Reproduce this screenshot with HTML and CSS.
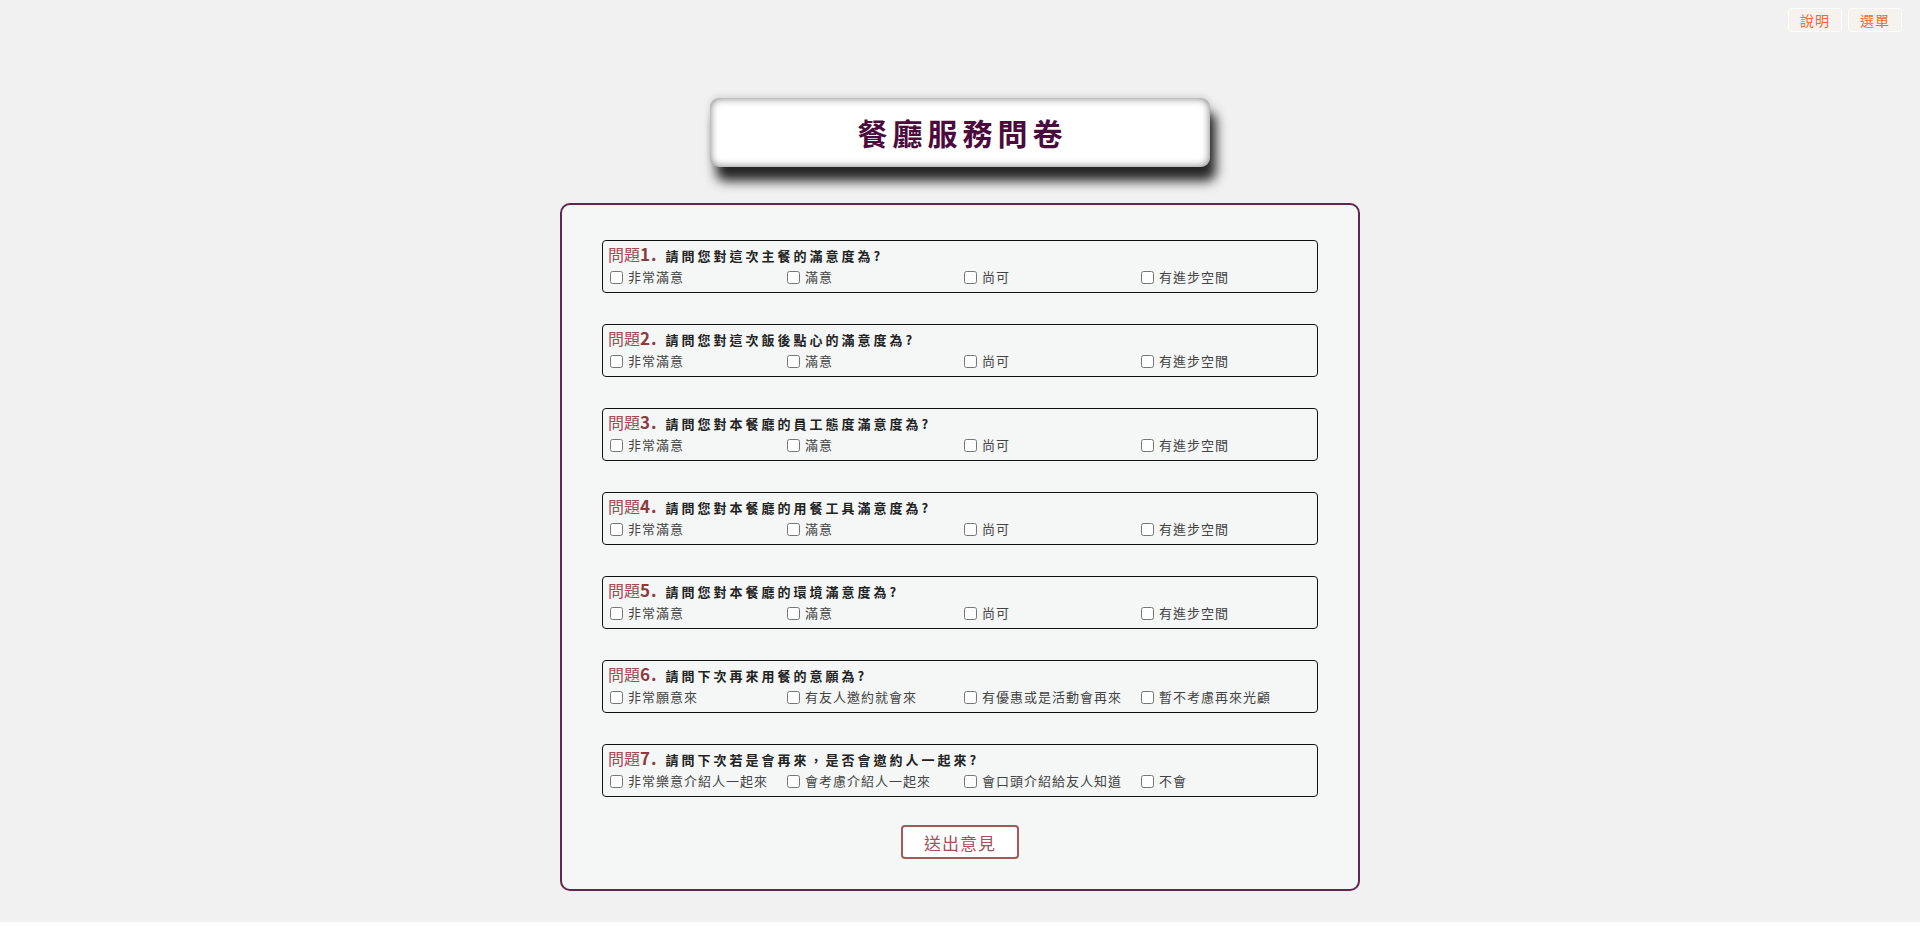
FILE: index.html
```html
<!DOCTYPE html>
<html lang="zh-Hant">
<head>
<meta charset="utf-8">
<title>餐廳服務問卷</title>
<link rel="stylesheet" href="styles.css">
</head>
<body>
<div class="page">
  <nav class="topbar">
    <button class="top-btn" type="button">說明</button>
    <button class="top-btn" type="button">選單</button>
  </nav>
  <h1 class="title">餐廳服務問卷</h1>
  <form class="survey">
    <div class="question">
      <div class="q-title"><span class="q-label">問題</span><span class="q-num">1.</span><span class="q-text">請問您對這次主餐的滿意度為?</span></div>
      <div class="options">
        <label class="opt"><input type="checkbox"> 非常滿意</label>
        <label class="opt"><input type="checkbox"> 滿意</label>
        <label class="opt"><input type="checkbox"> 尚可</label>
        <label class="opt"><input type="checkbox"> 有進步空間</label>
      </div>
    </div>
    <div class="question">
      <div class="q-title"><span class="q-label">問題</span><span class="q-num">2.</span><span class="q-text">請問您對這次飯後點心的滿意度為?</span></div>
      <div class="options">
        <label class="opt"><input type="checkbox"> 非常滿意</label>
        <label class="opt"><input type="checkbox"> 滿意</label>
        <label class="opt"><input type="checkbox"> 尚可</label>
        <label class="opt"><input type="checkbox"> 有進步空間</label>
      </div>
    </div>
    <div class="question">
      <div class="q-title"><span class="q-label">問題</span><span class="q-num">3.</span><span class="q-text">請問您對本餐廳的員工態度滿意度為?</span></div>
      <div class="options">
        <label class="opt"><input type="checkbox"> 非常滿意</label>
        <label class="opt"><input type="checkbox"> 滿意</label>
        <label class="opt"><input type="checkbox"> 尚可</label>
        <label class="opt"><input type="checkbox"> 有進步空間</label>
      </div>
    </div>
    <div class="question">
      <div class="q-title"><span class="q-label">問題</span><span class="q-num">4.</span><span class="q-text">請問您對本餐廳的用餐工具滿意度為?</span></div>
      <div class="options">
        <label class="opt"><input type="checkbox"> 非常滿意</label>
        <label class="opt"><input type="checkbox"> 滿意</label>
        <label class="opt"><input type="checkbox"> 尚可</label>
        <label class="opt"><input type="checkbox"> 有進步空間</label>
      </div>
    </div>
    <div class="question">
      <div class="q-title"><span class="q-label">問題</span><span class="q-num">5.</span><span class="q-text">請問您對本餐廳的環境滿意度為?</span></div>
      <div class="options">
        <label class="opt"><input type="checkbox"> 非常滿意</label>
        <label class="opt"><input type="checkbox"> 滿意</label>
        <label class="opt"><input type="checkbox"> 尚可</label>
        <label class="opt"><input type="checkbox"> 有進步空間</label>
      </div>
    </div>
    <div class="question">
      <div class="q-title"><span class="q-label">問題</span><span class="q-num">6.</span><span class="q-text">請問下次再來用餐的意願為?</span></div>
      <div class="options">
        <label class="opt"><input type="checkbox"> 非常願意來</label>
        <label class="opt"><input type="checkbox"> 有友人邀約就會來</label>
        <label class="opt"><input type="checkbox"> 有優惠或是活動會再來</label>
        <label class="opt"><input type="checkbox"> 暫不考慮再來光顧</label>
      </div>
    </div>
    <div class="question">
      <div class="q-title"><span class="q-label">問題</span><span class="q-num">7.</span><span class="q-text">請問下次若是會再來，是否會邀約人一起來?</span></div>
      <div class="options">
        <label class="opt"><input type="checkbox"> 非常樂意介紹人一起來</label>
        <label class="opt"><input type="checkbox"> 會考慮介紹人一起來</label>
        <label class="opt"><input type="checkbox"> 會口頭介紹給友人知道</label>
        <label class="opt"><input type="checkbox"> 不會</label>
      </div>
    </div>
    <div class="actions">
      <button class="submit" type="button">送出意見</button>
    </div>
  </form>
</div>
</body>
</html>
```

FILE: styles.css
```css
html {
  background: #ffffff;
}

body {
  margin: 0;
  font-family: "Noto Sans CJK TC", "Noto Sans", sans-serif;
}

.page {
  background: #f0f1f0;
  padding: 8px 0 31px;
}

.topbar {
  display: flex;
  justify-content: flex-end;
  gap: 6px;
  padding-right: 18px;
  height: 24px;
}

.top-btn {
  width: 54px;
  height: 24px;
  padding: 0;
  background: #f6f2ee;
  border: 1px solid #ffffff;
  border-radius: 4px;
  color: #f0682e;
  font-family: "Noto Sans CJK TC", sans-serif;
  font-size: 14px;
  letter-spacing: 1px;
  line-height: 22px;
}

.title {
  box-sizing: border-box;
  width: 500px;
  height: 69px;
  margin: 66px auto 0;
  background: #ffffff;
  border-radius: 9px;
  box-shadow: inset 0 0 9px rgba(0, 0, 0, 0.55), 6px 14px 12px rgba(0, 0, 0, 0.85), 0 -2px 6px rgba(0, 0, 0, 0.12);
  color: #4b0b3d;
  font-size: 30px;
  font-weight: 700;
  letter-spacing: 5px;
  line-height: 69px;
  text-align: center;
  padding-left: 5px;
}

.survey {
  box-sizing: border-box;
  width: 800px;
  margin: 36px auto 0;
  padding: 35px 40px 30px;
  background: #f4f7f6;
  border: 2px solid #5e2750;
  border-radius: 10px;
  display: flex;
  flex-direction: column;
  gap: 31px;
}

.question {
  border: 1px solid #111;
  border-radius: 4px;
  padding: 2px 3px 4px;
  height: 53px;
  box-sizing: border-box;
}

.q-title {
  height: 22px;
  line-height: 22px;
  white-space: nowrap;
  padding-left: 2px;
}

.q-label {
  color: #a34a52;
  font-size: 16px;
}

.q-num {
  color: #8e3a3c;
  font-size: 17px;
  font-weight: 700;
  letter-spacing: 1px;
  margin-right: 8px;
}

.q-text {
  color: #222;
  font-size: 13px;
  font-weight: 700;
  letter-spacing: 3px;
}

.options {
  display: grid;
  grid-template-columns: repeat(4, 1fr);
  margin-top: 2px;
}

.opt {
  display: flex;
  align-items: center;
  gap: 2px;
  color: #444;
  font-size: 13px;
  letter-spacing: 1px;
  line-height: 20px;
  white-space: nowrap;
}

.opt input {
  margin: 3px 3px 3px 4px;
}

.actions {
  display: flex;
  justify-content: center;
  margin-top: -3px;
}

.submit {
  width: 118px;
  height: 34px;
  padding: 0;
  background: #ffffff;
  border: 2px solid #a4585a;
  border-radius: 4px;
  color: #a4505a;
  font-family: "Noto Sans CJK TC", sans-serif;
  font-size: 17px;
  letter-spacing: 1px;
}
```
